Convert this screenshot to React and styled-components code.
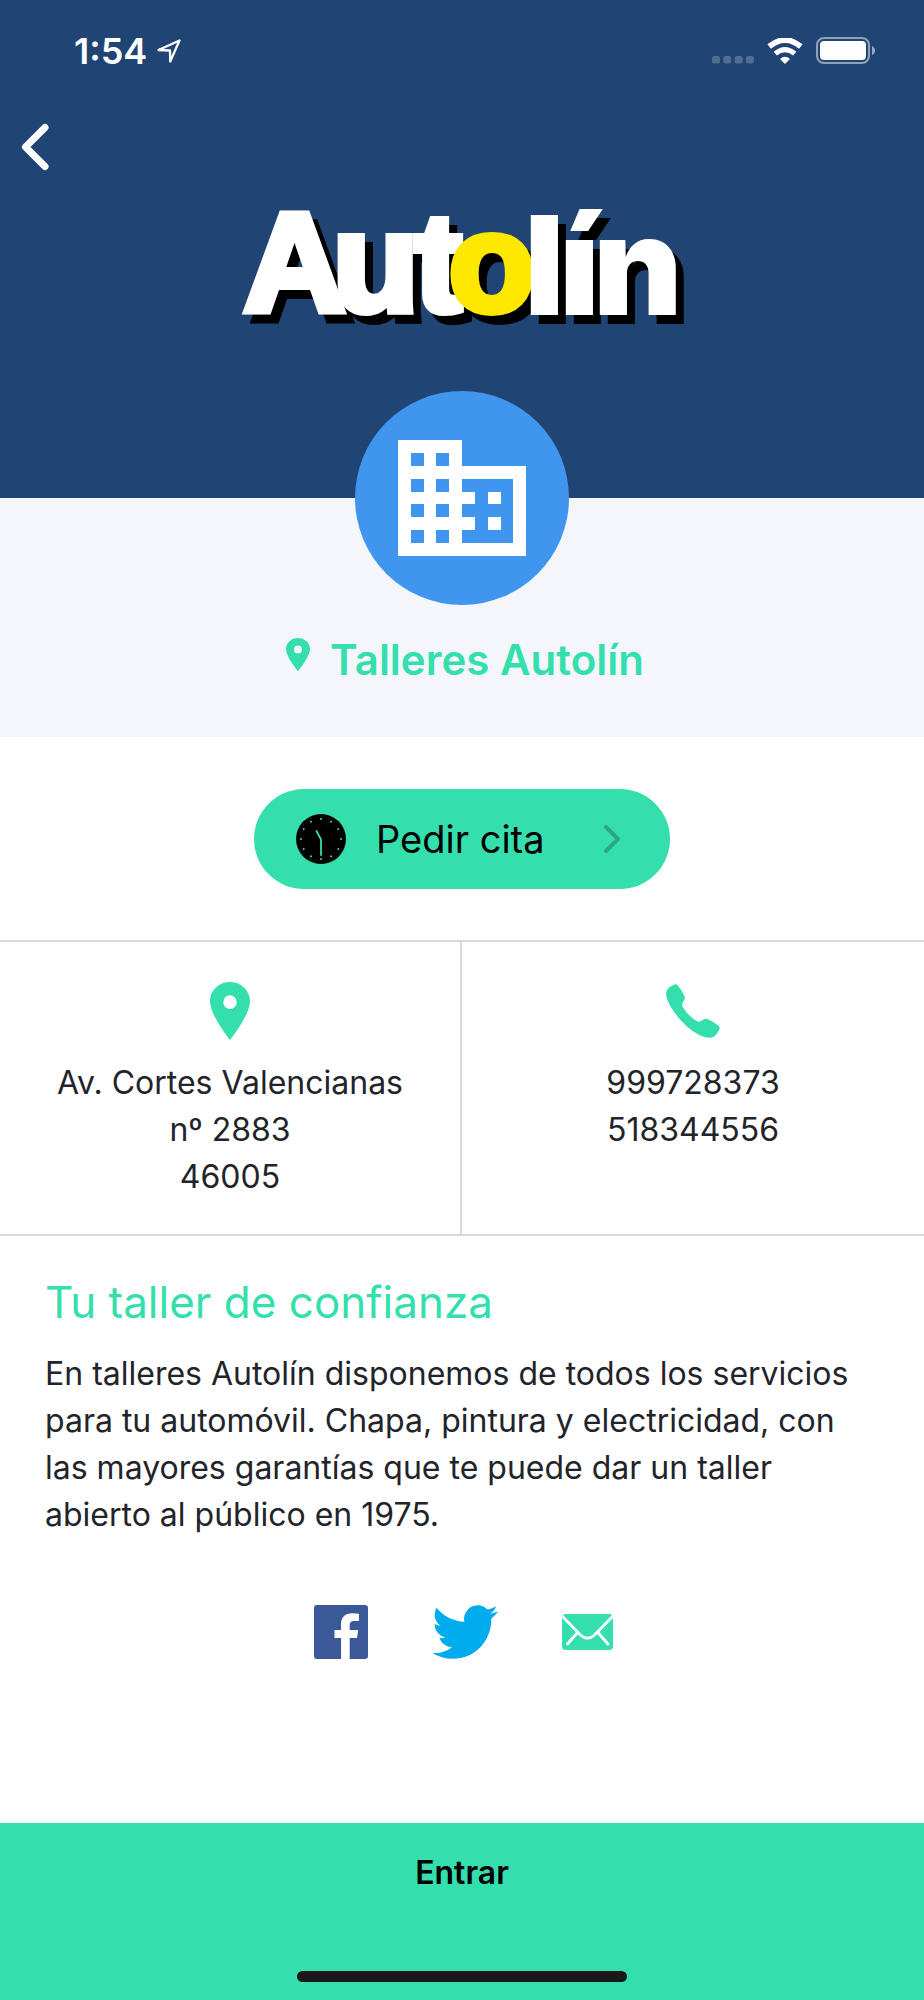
import React from "react";
import styled, { createGlobalStyle } from "styled-components";

const GlobalStyle = createGlobalStyle`
  * { box-sizing: border-box; }
  body { margin: 0; background: #fff; font-family: Inter, "Open Sans", sans-serif; color: #22242a; }
  button { font-family: inherit; border: 0; padding: 0; background: none; cursor: pointer; }
  a { color: inherit; text-decoration: none; }
  h1, h2, p { margin: 0; }
  svg { display: block; flex: none; }
`;

const Page = styled.div`
  display: flex;
  flex-direction: column;
  min-height: 100vh;
`;

const Header = styled.header`
  background: #204473;
  color: #fff;
  padding-bottom: 158px;
`;

const StatusBar = styled.div`
  display: flex;
  justify-content: space-between;
  align-items: center;
  height: 102px;
  padding: 0 48px 0 74px;
`;

const StatusGroup = styled.div`
  display: flex;
  align-items: center;
  gap: ${(p) => p.$gap}px;
`;

const Time = styled.span`
  font-size: 36px;
  line-height: 48px;
  font-weight: 600;
`;

const BackButton = styled.button`
  display: block;
  margin: 18px 0 0 16px;
`;

const LogoRow = styled.div`
  display: flex;
  justify-content: center;
  margin-top: 16px;
`;

const LogoDrawing = styled.svg`
  overflow: visible;
  filter: drop-shadow(8px 9px 0 #000);
`;

const RoundLetter = styled.text`
  font-family: "Liberation Sans", Arial, sans-serif;
  font-weight: 700;
  font-size: 140px;
  fill: ${(p) => p.$color};
  stroke: ${(p) => p.$color};
  stroke-width: 8px;
`;

const BlackLetter = styled.text`
  font-family: Inter, sans-serif;
  font-weight: 900;
  font-size: 138px;
  fill: #fff;
`;

const Profile = styled.section`
  display: flex;
  flex-direction: column;
  align-items: center;
  background: #f4f6fb;
  padding-bottom: 53px;
`;

const Avatar = styled.div`
  display: flex;
  align-items: center;
  justify-content: center;
  width: 214px;
  height: 214px;
  margin-top: -107px;
  border-radius: 50%;
  background: #4095ee;
`;

const NameRow = styled.div`
  display: flex;
  align-items: flex-start;
  gap: 20px;
  margin-top: 31px;
  padding-left: 6px;
  color: #34dfad;

  svg { margin-top: 2px; }
`;

const Name = styled.h1`
  font-size: 42px;
  line-height: 48px;
  font-weight: 600;
`;

const Booking = styled.section`
  display: flex;
  justify-content: center;
  padding: 52px 0 51px;
`;

const BookButton = styled.button`
  display: flex;
  align-items: center;
  width: 416px;
  height: 100px;
  padding: 0 48px 0 42px;
  border-radius: 50px;
  background: #34dfad;
  color: #000;
`;

const BookLabel = styled.span`
  flex: 1;
  padding-left: 30px;
  text-align: left;
  font-size: 38px;
  line-height: 48px;
`;

const Contact = styled.section`
  display: grid;
  grid-template-columns: 1fr 1fr;
  border-top: 2px solid #d8d9da;
  border-bottom: 2px solid #d8d9da;
`;

const ContactCell = styled.div`
  display: flex;
  flex-direction: column;
  align-items: center;
  padding: 40px 0 34px;
  text-align: center;
  font-size: 32px;
  line-height: 47px;

  &:first-child { border-right: 2px solid #d8d9da; }
`;

const ContactIcon = styled.div`
  display: flex;
  align-items: center;
  height: 58px;
  margin-bottom: 19px;
`;

const About = styled.section`
  padding: 42px 45px 0;
`;

const AboutTitle = styled.h2`
  font-size: 44px;
  line-height: 48px;
  font-weight: 400;
  color: #34dfad;
`;

const AboutText = styled.p`
  margin-top: 24px;
  font-size: 32px;
  line-height: 47px;
`;

const Social = styled.nav`
  display: flex;
  justify-content: center;
  align-items: center;
  gap: 64px;
  padding: 67px 0 67px 3px;
`;

const Footer = styled.footer`
  display: flex;
  flex-direction: column;
  align-items: center;
  justify-content: space-between;
  height: 177px;
  margin-top: auto;
  padding: 26px 0 18px;
  background: #34dfad;
`;

const EnterButton = styled.button`
  color: #000;
  font-size: 32px;
  line-height: 48px;
  font-weight: 600;
`;

const HomeIndicator = styled.div`
  width: 330px;
  height: 11px;
  border-radius: 6px;
  background: #191919;
`;

const Pin = ({ width, height }) => (
  <svg width={width} height={height} viewBox="5 2 14 20" preserveAspectRatio="none" fill="#34dfad" aria-hidden="true">
    <path fillRule="evenodd" d="M12 2C8.13 2 5 5 5 8.6 5 13.4 12 22 12 22s7-8.600 7-13.400C19 5 15.870 2 12 2Zm0 9.300a2.350 2.350 0 1 1 0-4.700 2.350 2.350 0 0 1 0 4.700Z" />
  </svg>
);

const Logo = () => (
  <LogoDrawing width="480" height="150" viewBox="0 0 480 150" role="img" aria-label="Autolín">
    <RoundLetter $color="#fff" x="22" y="121">A</RoundLetter>
    <RoundLetter $color="#fff" x="111" y="121">u</RoundLetter>
    <RoundLetter $color="#fff" x="193" y="121">t</RoundLetter>
    <RoundLetter $color="#ffe800" x="227" y="121">o</RoundLetter>
    <BlackLetter x="302" y="125">l</BlackLetter>
    <BlackLetter x="337" y="125">í</BlackLetter>
    <BlackLetter x="371" y="125">n</BlackLetter>
  </LogoDrawing>
);

const Clock = () => (
  <svg width="50" height="50" viewBox="0 0 50 50" aria-hidden="true">
    <circle cx="25" cy="25" r="25" fill="#000" />
    {Array.from({ length: 12 }, (_, i) => (
      <circle key={i} cx="25" cy="5" r="1" fill="#34dfad" transform={`rotate(${i * 30} 25 25)`} />
    ))}
    <path d="M20.500 17 25 25.500V41" fill="none" stroke="#34dfad" strokeWidth="1.800" strokeLinecap="round" />
  </svg>
);

export default function App() {
  return (
    <Page>
      <GlobalStyle />
      <Header>
        <StatusBar>
          <StatusGroup $gap={10}>
            <Time>1:54</Time>
            <svg width="24" height="24" viewBox="0 0 24 24" fill="none" stroke="#fff" strokeWidth="2.300" strokeLinejoin="round" aria-hidden="true">
              <path d="M1.500 11 22.500 1.500 13.200 22.500 13 11.500Z" />
            </svg>
          </StatusGroup>
          <StatusGroup $gap={13}>
            <svg width="42" height="27" viewBox="0 0 42 27" fill="#fff" opacity="0.22" aria-hidden="true">
              {[0, 11.300, 22.600, 33.900].map((x) => <rect key={x} x={x} y="18" width="8" height="7.500" rx="2.500" />)}
            </svg>
            <svg width="36" height="27" viewBox="0 0 36 27" aria-hidden="true">
              <path d="M2.200 8.500Q18-4.500 33.800 8.500" fill="none" stroke="#fff" strokeWidth="5.600" />
              <path d="M8.300 15.700Q18 7.500 27.700 15.700" fill="none" stroke="#fff" strokeWidth="5" />
              <path d="M13 21Q18 16.500 23 21L18 26Z" fill="#fff" />
            </svg>
            <svg width="60" height="28" viewBox="0 0 60 28" aria-hidden="true">
              <rect x="1" y="1" width="52" height="25" rx="7" fill="none" stroke="#fff" strokeOpacity=".5" strokeWidth="2" />
              <rect x="4" y="4" width="46" height="19" rx="4" fill="#fff" />
              <path d="M56 9q3 1.500 3 4.500t-3 4.500Z" fill="#fff" fillOpacity=".55" />
            </svg>
          </StatusGroup>
        </StatusBar>
        <BackButton aria-label="Volver">
          <svg width="40" height="54" viewBox="0 0 40 54" fill="none" stroke="#fff" strokeWidth="7" strokeLinecap="round" strokeLinejoin="round" aria-hidden="true">
            <path d="M29 7.500 9.500 27 29 46.500" />
          </svg>
        </BackButton>
        <LogoRow><Logo /></LogoRow>
      </Header>

      <Profile>
        <Avatar>
          <svg width="154" height="154" viewBox="0 0 24 24" fill="#fff" shapeRendering="crispEdges" aria-hidden="true">
            <path d="M12 7V3H2v18h20V7H12zM6 19H4v-2h2v2zm0-4H4v-2h2v2zm0-4H4V9h2v2zm0-4H4V5h2v2zm4 12H8v-2h2v2zm0-4H8v-2h2v2zm0-4H8V9h2v2zm0-4H8V5h2v2zm10 12h-8v-2h2v-2h-2v-2h2v-2h-2V9h8v10zm-2-8h-2v2h2v-2zm0 4h-2v2h2v-2z" />
          </svg>
        </Avatar>
        <NameRow>
          <Pin width={24} height={33} />
          <Name>Talleres Autolín</Name>
        </NameRow>
      </Profile>

      <Booking>
        <BookButton>
          <Clock />
          <BookLabel>Pedir cita</BookLabel>
          <svg width="20" height="30" viewBox="0 0 20 30" fill="none" stroke="#29a883" strokeWidth="4" strokeLinecap="round" strokeLinejoin="round" aria-hidden="true">
            <path d="M4 3 16 15 4 27" />
          </svg>
        </BookButton>
      </Booking>

      <Contact>
        <ContactCell>
          <ContactIcon><Pin width={40} height={58} /></ContactIcon>
          <p>Av. Cortes Valencianas</p>
          <p>nº 2883</p>
          <p>46005</p>
        </ContactCell>
        <ContactCell>
          <ContactIcon>
            <svg width="54" height="54" viewBox="0 0 54 54" fill="#34dfad" aria-hidden="true">
              <path d="M1 6Q4 2 9 .3Q10.500 0 11.700 1.300Q16 6.500 18.600 12.500Q19.300 14.500 18 16.500L16.300 19.200Q15.600 20.500 16.400 22.500Q21.500 31.500 31 37.300Q32.800 38.200 34.400 37.300L37.500 35.500Q39.500 34.500 41.500 35Q47.500 37.500 52.800 42Q54 43.300 53.600 44.800Q52 49.500 48 52.700Q44.500 54.500 39 53.300Q26 49 15 36.500Q5 25.500 1 15Q-.7 9.500 1 6Z" />
            </svg>
          </ContactIcon>
          <a href="tel:999728373">999728373</a>
          <a href="tel:518344556">518344556</a>
        </ContactCell>
      </Contact>

      <About>
        <AboutTitle>Tu taller de confianza</AboutTitle>
        <AboutText>
          En talleres Autolín disponemos de todos los servicios para tu automóvil. Chapa, pintura y
          electricidad, con las mayores garantías que te puede dar un taller abierto al público en 1975.
        </AboutText>
      </About>

      <Social aria-label="Redes sociales">
        <a href="#facebook" aria-label="Facebook">
          <svg width="54" height="54" viewBox="0 0 54 54" aria-hidden="true">
            <rect width="54" height="54" rx="3" fill="#3b5998" />
            <path d="M27 54V33h-6.500v-8H27v-5.500C27 12 31.500 8.300 38 8.300q4 0 7 .4v7.300h-4.500C36.500 16 35.700 18 35.700 20.500V25h8.500l-1.200 8h-7.300v21Z" fill="#fff" />
          </svg>
        </a>
        <a href="#twitter" aria-label="Twitter">
          <svg width="66" height="54" viewBox="0 2.200 24 19.600" fill="#00aced" aria-hidden="true">
            <path d="M23.954 4.569a10 10 0 0 1-2.825.775 4.958 4.958 0 0 0 2.163-2.723c-.951.555-2.005.959-3.127 1.184a4.920 4.920 0 0 0-8.384 4.482C7.691 8.094 4.066 6.130 1.640 3.161a4.822 4.822 0 0 0-.666 2.475c0 1.710.870 3.213 2.188 4.096a4.904 4.904 0 0 1-2.228-.616v.061a4.923 4.923 0 0 0 3.946 4.827 4.996 4.996 0 0 1-2.212.085 4.937 4.937 0 0 0 4.604 3.417 9.868 9.868 0 0 1-6.102 2.105c-.390 0-.779-.023-1.170-.067a13.995 13.995 0 0 0 7.557 2.209c9.054 0 13.999-7.496 13.999-13.986 0-.209 0-.420-.015-.630a9.936 9.936 0 0 0 2.457-2.548z" />
          </svg>
        </a>
        <a href="#mail" aria-label="Correo">
          <svg width="51" height="36" viewBox="0 0 51 36" aria-hidden="true">
            <rect width="51" height="36" rx="4" fill="#34dfad" />
            <path d="M0 2 19 21.500q6.500 5.500 13 0L51 2M16 18 5.500 30M35.500 18 46 30" fill="none" stroke="#fff" strokeWidth="2.800" strokeLinecap="round" />
          </svg>
        </a>
      </Social>

      <Footer>
        <EnterButton>Entrar</EnterButton>
        <HomeIndicator />
      </Footer>
    </Page>
  );
}
